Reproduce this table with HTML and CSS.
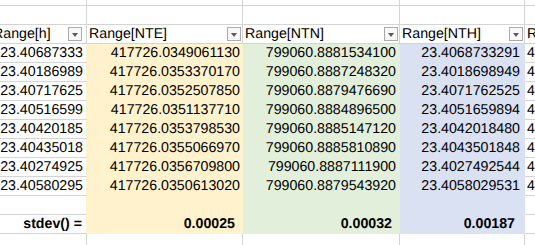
FILE: index.html
```html
<!DOCTYPE html>
<html>
<head>
<meta charset="utf-8">
<link rel="stylesheet" href="styles.css">
</head>
<body>
<div class="sheet">
  <div class="c"></div><div class="c"></div><div class="c"></div><div class="c"></div><div class="c"></div>
  <div class="c"></div><div class="c"></div><div class="c"></div><div class="c"></div><div class="c"></div>

  <div class="c hd hd-a"><span>Range[h]</span><span class="dd"><i class="tri"></i></span></div>
  <div class="c hd"><span>Range[NTE]</span><span class="dd"><i class="tri"></i></span></div>
  <div class="c hd"><span>Range[NTN]</span><span class="dd"><i class="tri"></i></span></div>
  <div class="c hd"><span>Range[NTH]</span><span class="dd"><i class="tri"></i></span></div>
  <div class="c hd hd-r"><span>Range[NTE]</span></div>

  <div class="c a num">23.40687333</div><div class="c nte num">417726.0349061130</div><div class="c ntn num">799060.8881534100</div><div class="c nth num">23.4068733291</div><div class="c r">417726.0349061130</div>
  <div class="c a num">23.40186989</div><div class="c nte num">417726.0353370170</div><div class="c ntn num">799060.8887248320</div><div class="c nth num">23.4018698949</div><div class="c r">417726.0353370170</div>
  <div class="c a num">23.40717625</div><div class="c nte num">417726.0352507850</div><div class="c ntn num">799060.8879476690</div><div class="c nth num">23.4071762525</div><div class="c r">417726.0352507850</div>
  <div class="c a num">23.40516599</div><div class="c nte num">417726.0351137710</div><div class="c ntn num">799060.8884896500</div><div class="c nth num">23.4051659894</div><div class="c r">417726.0351137710</div>
  <div class="c a num">23.40420185</div><div class="c nte num">417726.0353798530</div><div class="c ntn num">799060.8885147120</div><div class="c nth num">23.4042018480</div><div class="c r">417726.0353798530</div>
  <div class="c a num">23.40435018</div><div class="c nte num">417726.0355066970</div><div class="c ntn num">799060.8885810890</div><div class="c nth num">23.4043501848</div><div class="c r">417726.0355066970</div>
  <div class="c a num">23.40274925</div><div class="c nte num">417726.0356709800</div><div class="c ntn num">799060.8887111900</div><div class="c nth num">23.4027492544</div><div class="c r">417726.0356709800</div>
  <div class="c a num">23.40580295</div><div class="c nte num">417726.0350613020</div><div class="c ntn num">799060.8879543920</div><div class="c nth num">23.4058029531</div><div class="c r">417726.0350613020</div>

  <div class="c a"></div><div class="c nte"></div><div class="c ntn"></div><div class="c nth"></div><div class="c"></div>

  <div class="c a num b sd-a">stdev() =</div><div class="c nte num b sd-nte">0.00025</div><div class="c ntn num b sd-ntn">0.00032</div><div class="c nth num b sd-nth">0.00187</div><div class="c"></div>

  <div class="c"></div><div class="c"></div><div class="c"></div><div class="c"></div><div class="c"></div>
</div>
</body>
</html>
```

FILE: styles.css
```css
html, body {
  margin: 0;
  padding: 0;
  background: #ffffff;
  overflow: hidden;
}

.sheet {
  display: grid;
  grid-template-columns: 97px 156px 157px 125px 160px;
  grid-auto-rows: 19px;
  margin: -13px 0 0 -10px;
  width: 695px;
}

.c {
  box-sizing: border-box;
  border-right: 1px solid #d4d4d4;
  border-bottom: 1px solid #d4d4d4;
  font-family: "Liberation Sans", Arial, sans-serif;
  font-size: 14.2px;
  line-height: 18px;
  color: #000;
  white-space: nowrap;
  overflow: hidden;
  text-rendering: geometricPrecision;
  font-variant-numeric: tabular-nums;
}

.num {
  text-align: right;
  padding-right: 3px;
}

.b {
  font-weight: bold;
}

.hd {
  display: flex;
  align-items: center;
  padding-left: 2px;
  padding-right: 1px;
}

.hd span:first-child {
  line-height: 18px;
}

.hd-a {
  padding-left: 3px;
  padding-right: 4px;
}

.hd-r {
  padding-left: 2px;
}

.dd {
  margin-left: auto;
  box-sizing: border-box;
  width: 14px;
  height: 14px;
  border: 1px solid #ababab;
  background: #f8f8f8;
  display: flex;
  align-items: center;
  justify-content: center;
}

.tri {
  display: block;
  width: 0;
  height: 0;
  border-left: 3.5px solid transparent;
  border-right: 3.5px solid transparent;
  border-top: 4px solid #5a5a5a;
  margin-top: 1px;
}

.a {
  border-right-color: #fff2cc;
}

.nte {
  background: #fff2cc;
  border-color: #fff2cc;
  padding-right: 2px;
}

.ntn {
  background: #e2efda;
  border-color: #e2efda;
  padding-right: 3px;
}

.nth {
  background: #d9e1f2;
  border-color: #d9e1f2;
  padding-right: 4px;
}

.r {
  padding-left: 2px;
}

.sd-a {
  padding-right: 4px;
}

.sd-nte {
  padding-right: 7px;
}

.sd-ntn {
  padding-right: 7px;
}

.sd-nth {
  padding-right: 9px;
}
```
